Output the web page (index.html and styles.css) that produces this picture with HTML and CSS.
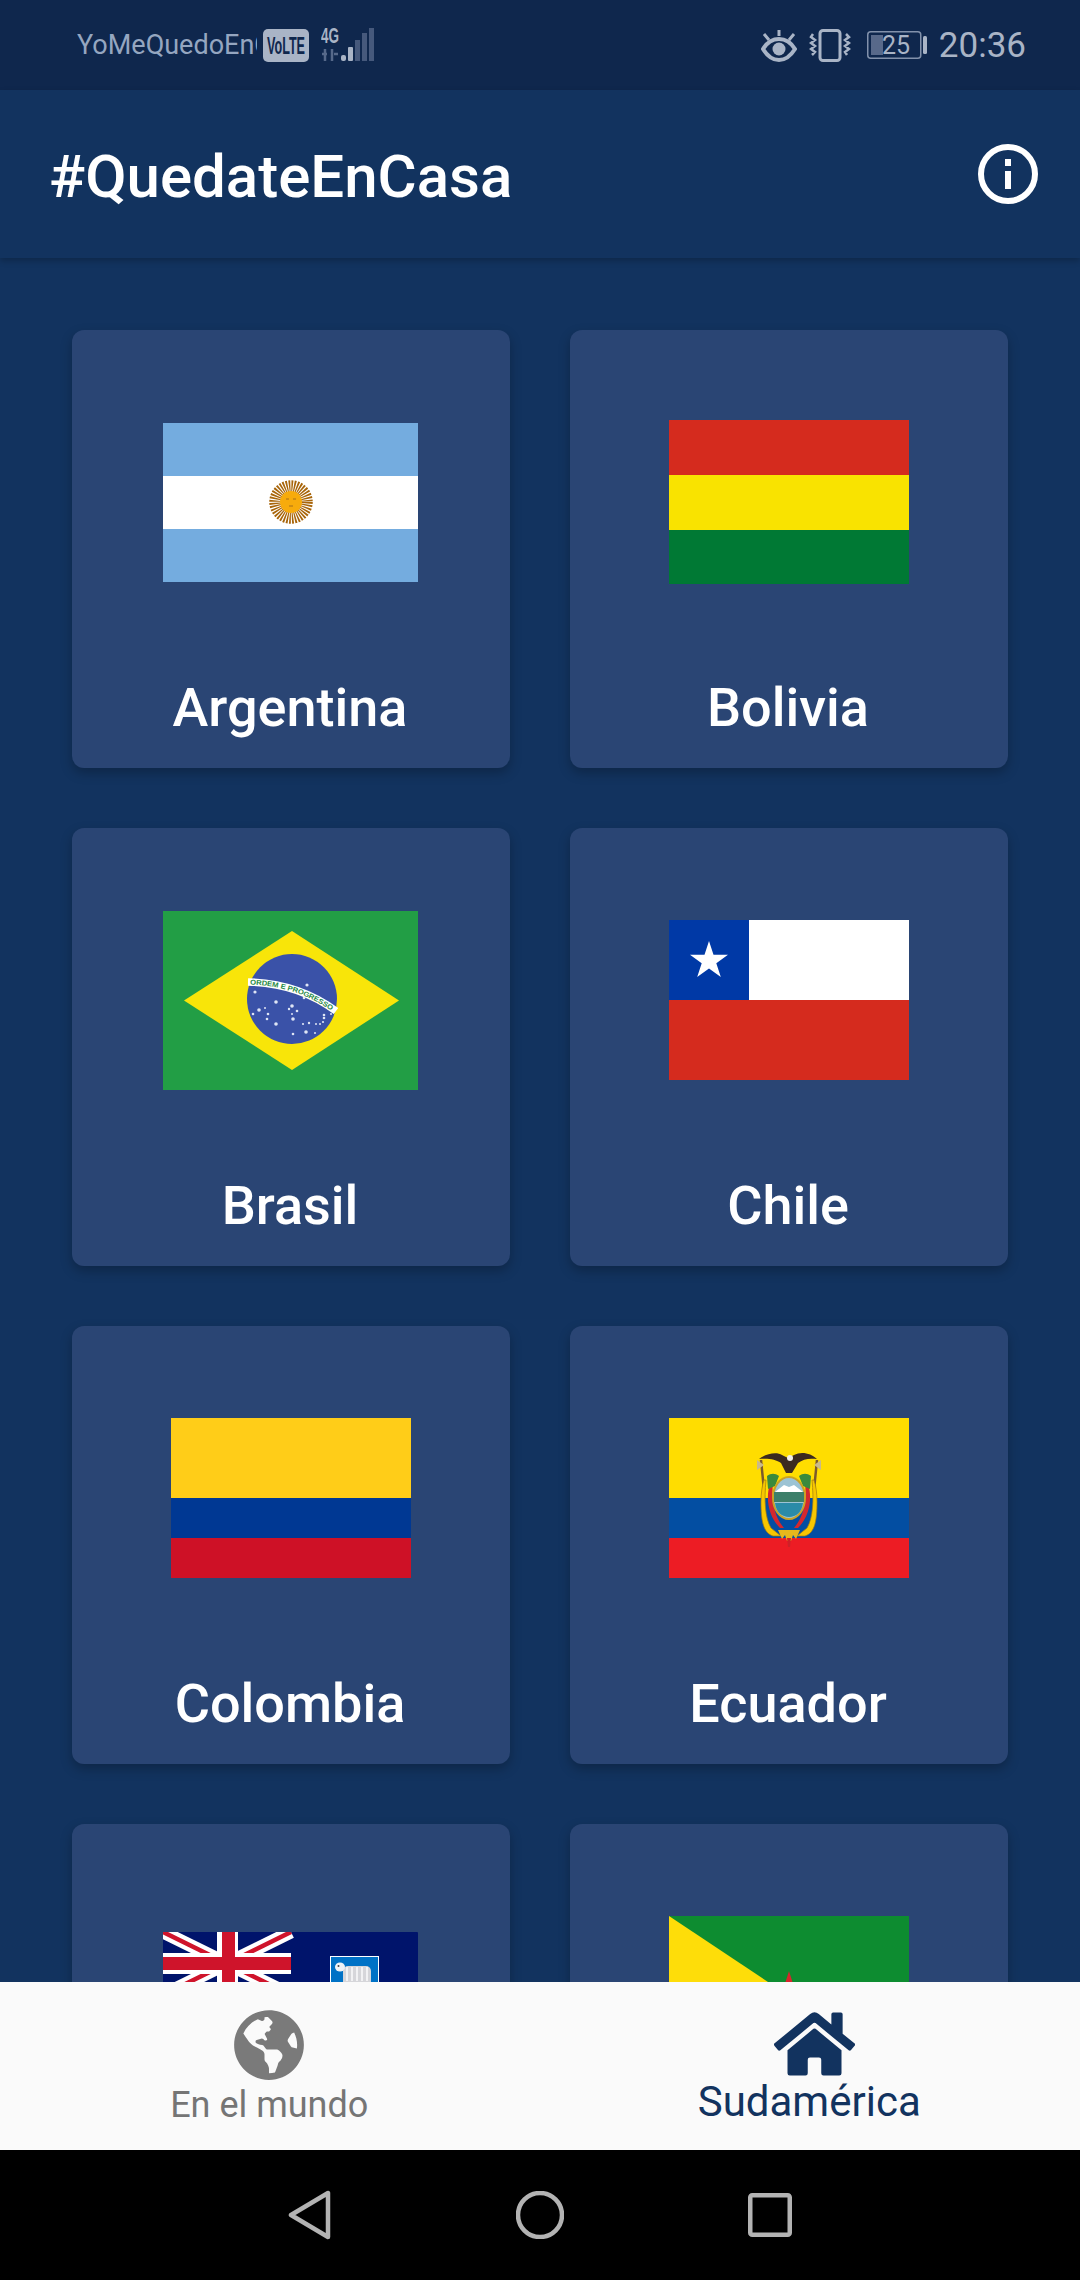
FILE: index.html
```html
<!DOCTYPE html>
<html lang="es">
<head>
<meta charset="utf-8">
<title>#QuedateEnCasa</title>
<link rel="stylesheet" href="styles.css">
</head>
<body>
<div class="screen">
  <header class="status">
    <div class="status-left">
      <span class="carrier">YoMeQuedoEnCasa</span>
      <span class="volte"><svg width="46" height="33" viewBox="0 0 46 33"><rect width="46" height="33" rx="5" fill="#a9b4c6"/><text x="4" y="25" textLength="38" lengthAdjust="spacingAndGlyphs" class="volte-text">VoLTE</text></svg></span>
      <svg class="signal" width="54" height="36" viewBox="0 0 54 36">
        <text x="0" y="16" textLength="18" lengthAdjust="spacingAndGlyphs" class="net-text">4G</text>
        <path d="M4 22v12M11 22v12M1 27h5M13 27h4" stroke="#56698a" stroke-width="2.500" fill="none"/>
        <rect x="20" y="28" width="5" height="6" rx="2" fill="#a9b4c6"/>
        <rect x="27" y="20" width="5" height="14" rx="1" fill="#a9b4c6"/>
        <rect x="34" y="13" width="5" height="21" fill="#46597c"/>
        <rect x="41" y="6" width="5" height="28" fill="#46597c"/>
        <rect x="48" y="1" width="5" height="33" fill="#46597c"/>
      </svg>
    </div>
    <div class="status-right">
      <svg width="36" height="33" viewBox="0 0 36 33"><path d="M2 20C7 12 12 10 18 10s11 2 16 10c-5 8-10 11-16 11S7 28 2 20z" fill="none" stroke="#a9b4c6" stroke-width="4"/><circle cx="18" cy="20" r="6.500" fill="#a9b4c6"/><path d="M18 1v6M3 5l5 6M33 5l-5 6" stroke="#a9b4c6" stroke-width="3"/></svg>
      <svg width="42" height="33" viewBox="0 0 42 33"><rect x="11" y="1.500" width="20" height="30" rx="3" fill="none" stroke="#a9b4c6" stroke-width="3"/><path d="M4 5l-2 3 4 3-4 3 4 3-4 3 4 3-3 3M37 5l3 3-4 3 4 3-4 3 4 3-4 3 2 3" fill="none" stroke="#a9b4c6" stroke-width="2.500"/></svg>
      <svg class="battery" width="60" height="28" viewBox="0 0 60 28"><rect x=".75" y=".75" width="53" height="26.500" rx="3" fill="none" stroke="#8291ab" stroke-width="1.500"/><rect x="4" y="4" width="12" height="20" fill="#58698a"/><rect x="56" y="5" width="4" height="18" rx="1.500" fill="#a9b4c6"/><text x="29" y="23" text-anchor="middle" class="batt-text">25</text></svg>
      <span class="clock">20:36</span>
    </div>
  </header>

  <div class="appbar">
    <h1 class="title">#QuedateEnCasa</h1>
    <svg width="60" height="60" viewBox="0 0 60 60"><circle cx="30" cy="30" r="27" fill="none" stroke="#fff" stroke-width="6"/><rect x="27" y="15" width="6" height="7" fill="#fff"/><rect x="27" y="27" width="6" height="18" fill="#fff"/></svg>
  </div>

  <main class="content">
    <div class="grid">
      <article class="card">
        <div class="flag-area">
          <svg class="flag-wide" width="255" height="159" viewBox="0 0 255 159">
            <rect width="255" height="159" fill="#74acdf"/><rect y="53" width="255" height="53" fill="#fff"/>
            <circle cx="128" cy="79" r="16" fill="none" stroke="#a8650a" stroke-width="11.500" stroke-dasharray="1.500 1.010"/>
            <circle cx="128" cy="79" r="11" fill="#f7ab0c"/>
            <path d="M123 76h3M130 76h3M126 83h4" stroke="#a8701a" stroke-width="1"/>
          </svg>
        </div>
        <h2 class="name">Argentina</h2>
      </article>
      <article class="card">
        <div class="flag-area">
          <svg width="240" height="164" viewBox="0 0 240 164"><rect width="240" height="55" fill="#d52b1e"/><rect y="55" width="240" height="55" fill="#f9e300"/><rect y="110" width="240" height="54" fill="#007934"/></svg>
        </div>
        <h2 class="name">Bolivia</h2>
      </article>
      <article class="card">
        <div class="flag-area">
          <svg class="flag-wide" width="255" height="179" viewBox="0 0 255 179">
            <rect width="255" height="179" fill="#229e45"/>
            <path d="M21 89.500L129 20 236 89.500 129 159z" fill="#f8e509"/>
            <circle cx="129" cy="88" r="45" fill="#3a52a8"/>
            <path id="band" d="M85 71Q135 72 173 100" fill="none" stroke="#fff" stroke-width="7.500"/>
            <text class="motto" dy="2.500"><textPath href="#band" startOffset="2" textLength="88" lengthAdjust="spacingAndGlyphs">ORDEM E PROGRESSO</textPath></text>
            <g fill="#dfe5f5">
              <circle cx="92" cy="81" r="1.600"/><circle cx="113" cy="91" r="1.800"/><circle cx="129" cy="95" r="1.800"/><circle cx="96" cy="99" r="1.800"/><circle cx="102" cy="97" r="1"/><circle cx="105" cy="103" r="1.300"/><circle cx="90" cy="103" r="1.300"/><circle cx="104" cy="108" r="1.300"/><circle cx="113" cy="113" r="1.800"/><circle cx="126" cy="98" r="1.200"/><circle cx="129" cy="103" r="1"/><circle cx="134" cy="100" r="1.300"/><circle cx="130" cy="108" r="1.800"/><circle cx="140" cy="113" r="1.100"/><circle cx="146" cy="112" r="1.200"/><circle cx="153" cy="113" r="1"/><circle cx="157" cy="113" r="1"/><circle cx="160" cy="111" r="1.100"/><circle cx="161" cy="107" r="1.300"/><circle cx="161" cy="104" r="1.300"/><circle cx="168" cy="103" r="1"/><circle cx="143" cy="121" r="1.800"/><circle cx="130" cy="123" r="1.300"/><circle cx="152" cy="122" r="1"/><circle cx="141" cy="87" r="1.300"/><circle cx="144" cy="74" r="1.600"/>
            </g>
          </svg>
        </div>
        <h2 class="name">Brasil</h2>
      </article>
      <article class="card">
        <div class="flag-area">
          <svg width="240" height="160" viewBox="0 0 240 160"><rect width="240" height="80" fill="#fff"/><rect y="80" width="240" height="80" fill="#d52b1e"/><rect width="80" height="80" fill="#0039a6"/><path d="M40 21l4.500 13.800H59L47.300 43.300l4.500 13.800L40 48.600l-11.800 8.500 4.500-13.800L21 34.800h14.500z" fill="#fff"/></svg>
        </div>
        <h2 class="name">Chile</h2>
      </article>
      <article class="card">
        <div class="flag-area">
          <svg width="240" height="160" viewBox="0 0 240 160"><rect width="240" height="80" fill="#ffcd18"/><rect y="80" width="240" height="40" fill="#003893"/><rect y="120" width="240" height="40" fill="#ce1126"/></svg>
        </div>
        <h2 class="name">Colombia</h2>
      </article>
      <article class="card">
        <div class="flag-area">
          <svg width="240" height="160" viewBox="0 0 240 160">
            <rect width="240" height="80" fill="#ffdd00"/><rect y="80" width="240" height="40" fill="#034ea2"/><rect y="120" width="240" height="40" fill="#ed1c24"/>
            <path d="M95 72l-3-30M145 72l3-30" stroke="#7c5a2c" stroke-width="2.500" fill="none"/>
            <path d="M88 42l7 5-7 5zM152 42l-7 5 7 5z" fill="#c9b98a"/>
            <path d="M97 62c-2 20-1 38 5 48l10 8h-8c-10-3-12-16-12-34 0-9 1-16 3-22zM143 62c2 20 1 38-5 48l-10 8h8c10-3 12-16 12-34 0-9-1-16-3-22z" fill="#f7c600" stroke="#a07b12" stroke-width=".7"/>
            <path d="M101 66c-5 15-1 33 10 44h4c-10-12-13-28-11-44zM139 66c5 15 1 33-10 44h-4c10-12 13-28 11-44z" fill="#d3282e"/>
            <path d="M98 58c4-3 8-3 12 0l-4 10-7 3zM142 58c-4-3-8-3-12 0l4 10 7 3z" fill="#3a8a3c"/>
            <ellipse cx="120" cy="80" rx="16" ry="21" fill="#9cc3d4" stroke="#c9a227" stroke-width="2"/>
            <path d="M106 74l9-7 5 2 5-2 9 7z" fill="#fff"/>
            <path d="M105 74h30v10h-30z" fill="#3d7f6a"/>
            <path d="M106 85h28c-1 9-7 14-14 14s-13-5-14-14z" fill="#2a8ba8"/>
            <path d="M90 41c8-6 18-7 23-4l6 3 6-3c7-4 17-2 23 4-8-1-14 0-19 4l-6 10h-6l-5-10c-5-4-14-5-22-4z" fill="#3b2a20"/>
            <circle cx="121" cy="40" r="3" fill="#f2efe8"/>
            <path d="M109 112h22l-4 9-3-4-2 6h-4l-2-6-3 4z" fill="#e6b81c"/>
            <path d="M118 120h4l-1 9h-2z" fill="#cf2028"/>
          </svg>
        </div>
        <h2 class="name">Ecuador</h2>
      </article>
      <article class="card">
        <div class="flag-area">
          <svg class="flag-wide" width="255" height="128" viewBox="0 0 255 128">
            <rect width="255" height="128" rx="1" fill="#00146b"/>
            <path d="M0 0l128 63M128 0L0 63" stroke="#fff" stroke-width="13"/>
            <path d="M0 0l64 31.500M128 0L64 31.500M0 63l64-31.500M128 63L64 31.500" stroke="#cf142b" stroke-width="4.500"/>
            <rect x="54" width="21" height="63" fill="#fff"/><rect y="21" width="128" height="21" fill="#fff"/>
            <rect x="59" width="13" height="63" fill="#cf142b"/><rect y="25" width="128" height="13" fill="#cf142b"/>
            <rect x="167.500" y="24.500" width="48" height="70" fill="#0072c6" stroke="#fff"/>
            <rect x="180" y="34" width="28" height="20" rx="5" fill="#d6d6da"/>
            <path d="M184 35v14M189 35v14M194 35v14M199 35v14M204 35v14" stroke="#f2f2f4" stroke-width="2"/>
            <ellipse cx="177" cy="35" rx="5" ry="4.500" fill="#eef3f7"/>
            <circle cx="175.500" cy="34" r="1" fill="#444"/>
          </svg>
        </div>
        <h2 class="name">Islas Malvinas</h2>
      </article>
      <article class="card">
        <div class="flag-area">
          <svg width="240" height="160" viewBox="0 0 240 160"><rect width="240" height="160" fill="#0d8c30"/><path d="M0 0L240 160H0z" fill="#fedd09"/><path d="M120 55l6 19h20l-16 12 6 19-16-12-16 12 6-19-16-12h20z" fill="#d8262c"/></svg>
        </div>
        <h2 class="name">Guayana Francesa</h2>
      </article>
    </div>
  </main>

  <nav class="tabs">
    <div class="tab tab-world">
      <svg width="70" height="72" viewBox="0 0 496 512"><path fill="#7a7a7a" d="M248 8C111.030 8 0 119.030 0 256s111.030 248 248 248 248-111.030 248-248S384.970 8 248 8zm82.290 357.600c-3.900 3.880-7.990 7.950-11.310 11.280-2.990 3-5.100 6.700-6.170 10.710-1.510 5.660-2.730 11.380-4.770 16.870l-17.390 46.850c-13.760 3-28 4.690-42.650 4.690v-27.380c1.690-12.620-7.640-36.260-22.630-51.250-6-6-9.370-14.140-9.370-22.630v-32.010c0-11.640-6.270-22.340-16.460-27.970-14.370-7.950-34.810-19.060-48.810-26.110-11.480-5.780-22.100-13.140-31.650-21.750l-.8-.72a114.792 114.792 0 0 1-18.060-20.740c-9.380-13.770-24.660-36.420-34.590-51.140 20.470-45.500 57.360-82.040 103.200-101.890l24.010 12.010C203.480 89.740 216 82.010 216 70.110v-11.300c7.990-1.290 16.120-2.110 24.420-2.420l28.300 28.300c6.250 6.250 6.250 16.380 0 22.630L264 112l-10.340 10.340c-3.120 3.120-3.120 8.190 0 11.310l4.690 4.690c3.120 3.120 3.120 8.190 0 11.310l-8 8a8.008 8.008 0 0 1-5.660 2.340h-8.990c-2.080 0-4.080.81-5.580 2.270l-9.920 9.650a8.008 8.008 0 0 0-1.580 9.310l15.590 31.190c2.660 5.320-1.210 11.580-7.150 11.580h-5.640c-1.930 0-3.790-.7-5.240-1.960l-9.280-8.060a16.017 16.017 0 0 0-15.550-3.100l-31.170 10.390a11.950 11.950 0 0 0-8.170 11.340c0 4.530 2.560 8.660 6.610 10.690l11.080 5.540c9.410 4.710 19.790 7.160 30.310 7.160s22.590 27.290 32 32h66.750c8.490 0 16.620 3.370 22.630 9.370l13.690 13.690a30.503 30.503 0 0 1 8.930 21.570 46.536 46.536 0 0 1-13.720 32.980zM417 274.250c-5.790-1.450-10.840-5-14.150-9.970l-17.980-26.970a23.970 23.970 0 0 1 0-26.620l19.590-29.380c2.320-3.470 5.500-6.280 9.240-8.150l12.980-6.490C440.200 193.590 448 223.870 448 256c0 8.670-.74 17.160-1.820 25.540L417 274.250z"/></svg>
      <span class="tab-label">En el mundo</span>
    </div>
    <div class="tab tab-active">
      <svg class="home-icon" width="81" height="72" viewBox="0 0 576 512"><path fill="#12335f" d="M280.370 148.260L96 300.110V464a16 16 0 0 0 16 16l112.060-.29a16 16 0 0 0 15.920-16V368a16 16 0 0 1 16-16h64a16 16 0 0 1 16 16v95.640a16 16 0 0 0 16 16.050L464 480a16 16 0 0 0 16-16V300L295.670 148.260a12.190 12.190 0 0 0-15.300 0zM571.600 251.470L488 182.560V44.050a12 12 0 0 0-12-12h-56a12 12 0 0 0-12 12v72.610L318.470 43a48 48 0 0 0-61 0L4.340 251.470a12 12 0 0 0-1.600 16.900l25.500 31A12 12 0 0 0 45.150 301l235.220-193.740a12.190 12.190 0 0 1 15.300 0L530.900 301a12 12 0 0 0 16.900-1.600l25.500-31a12 12 0 0 0-1.700-16.930z"/></svg>
      <span class="tab-label">Sudamérica</span>
    </div>
  </nav>

  <footer class="sysnav">
    <svg width="44" height="50" viewBox="0 0 44 50"><path d="M40 3v44L3 25z" fill="none" stroke="#b3b3b3" stroke-width="4.500" stroke-linejoin="round"/></svg>
    <svg width="48" height="48" viewBox="0 0 48 48"><circle cx="24" cy="24" r="22" fill="none" stroke="#b3b3b3" stroke-width="4.500"/></svg>
    <svg width="44" height="44" viewBox="0 0 44 44"><rect x="2.250" y="2.250" width="39.500" height="39.500" rx="2" fill="none" stroke="#b3b3b3" stroke-width="4.500"/></svg>
  </footer>
</div>
</body>
</html>
```
FILE: styles.css
```css
* { box-sizing: border-box; }
html, body { margin: 0; padding: 0; background: #000; }
.screen {
  width: 1080px;
  height: 2280px;
  display: flex;
  flex-direction: column;
  overflow: hidden;
  font-family: Roboto, "Liberation Sans", sans-serif;
  background: #12335f;
}
svg { display: block; flex: none; }

.status {
  height: 90px;
  flex: none;
  background: #0f274d;
  color: #a9b4c6;
  display: flex;
  align-items: center;
  justify-content: space-between;
  padding: 0 54px 0 77px;
}
.status-left { display: flex; align-items: center; }
.carrier {
  width: 180px;
  overflow: hidden;
  white-space: nowrap;
  font-size: 27px;
  color: #95a6c0;
}
.volte { margin-left: 6px; }
.volte-text { font: 700 24px "Liberation Sans", sans-serif; fill: #0f274d; }
.signal { margin-left: 12px; }
.net-text { font: 700 22px "Liberation Sans", sans-serif; fill: #a9b4c6; }
.status-right { display: flex; align-items: center; gap: 12px; }
.battery { margin-left: 4px; }
.batt-text { font: 400 25px Roboto, sans-serif; fill: #a9b4c6; }
.clock { font-size: 35px; color: #a9b4c6; }

.appbar {
  height: 168px;
  flex: none;
  position: relative;
  background: #12335f;
  box-shadow: 0 3px 6px rgba(0, 0, 0, .22);
  display: flex;
  align-items: center;
  justify-content: space-between;
  padding: 0 42px 0 49px;
}
.title { margin: 5px 0 0; font-size: 60px; font-weight: 500; line-height: 66px; color: #fff; }

.content { flex: 1; min-height: 0; overflow: hidden; padding: 72px 72px 0; }
.grid { display: grid; grid-template-columns: 438px 438px; gap: 60px; }
.card {
  height: 438px;
  border-radius: 12px;
  background: #2a4574;
  box-shadow: 0 5px 12px rgba(0, 0, 0, .25);
  display: flex;
  flex-direction: column;
  align-items: center;
}
.flag-area { height: 344px; display: flex; align-items: center; justify-content: center; }
.flag-wide { margin-right: 1px; }
.name { margin: 4px 2px 0 0; font-size: 54px; font-weight: 500; line-height: 60px; color: #fff; white-space: nowrap; }
.motto { font: 700 7px "Liberation Sans", sans-serif; fill: #1f8a45; }

.tabs { height: 168px; flex: none; background: #fafafa; display: flex; position: relative; }
.tab { flex: 1; display: flex; flex-direction: column; align-items: center; padding-top: 27px; }
.tab-world { padding-right: 3px; }
.tab-active { padding-top: 26px; }
.home-icon { margin-left: 8px; }
.tab-label { margin-top: 2px; font-size: 36px; line-height: 44px; color: #757575; }
.tab-active .tab-label { margin: 0 3px 0 0; font-size: 42px; color: #12335f; }

.sysnav {
  height: 130px;
  flex: none;
  background: #000;
  display: flex;
  align-items: center;
  justify-content: center;
  gap: 184px;
}
```
